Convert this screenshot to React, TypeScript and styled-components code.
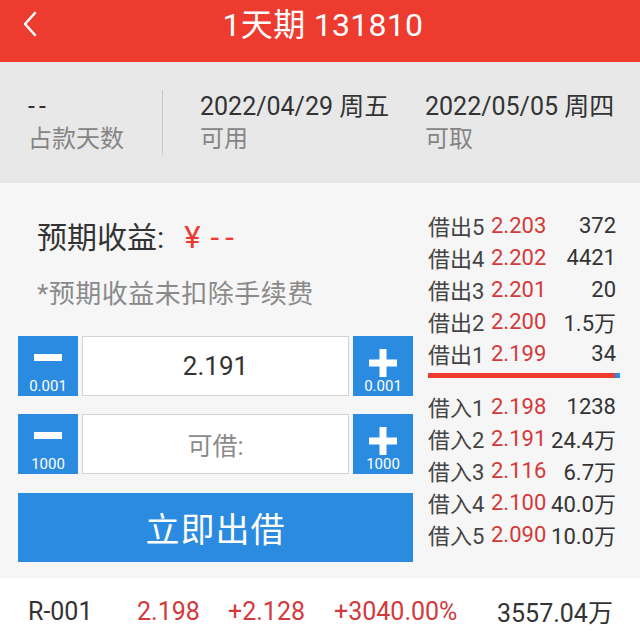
import React from 'react';
import styled, { createGlobalStyle } from 'styled-components';

const GlobalStyle = createGlobalStyle`
    html, body {
        margin: 0;
        padding: 0;
        background: #ffffff;
    }
    body {
        font-family: Roboto, "Noto Sans CJK SC", sans-serif;
        color: #333333;
    }
`;

const RED = '#ee3b30';
const BLUE = '#2b8be0';
const PRICE_RED = '#d3393b';

interface Level {
    label: string;
    price: string;
    volume: string;
}

const lends: Level[] = [
    { label: '借出5', price: '2.203', volume: '372' },
    { label: '借出4', price: '2.202', volume: '4421' },
    { label: '借出3', price: '2.201', volume: '20' },
    { label: '借出2', price: '2.200', volume: '1.5万' },
    { label: '借出1', price: '2.199', volume: '34' },
];

const borrows: Level[] = [
    { label: '借入1', price: '2.198', volume: '1238' },
    { label: '借入2', price: '2.191', volume: '24.4万' },
    { label: '借入3', price: '2.116', volume: '6.7万' },
    { label: '借入4', price: '2.100', volume: '40.0万' },
    { label: '借入5', price: '2.090', volume: '10.0万' },
];

const BackIcon = () => (
    <svg width="16" height="26" viewBox="0 0 16 26" fill="none">
        <path d="M13 2 L3 13 L13 24" stroke="#ffffff" strokeWidth="2.6" strokeLinecap="round" strokeLinejoin="round" />
    </svg>
);

const MinusIcon = () => (
    <svg width="28" height="28" viewBox="0 0 28 28">
        <rect x="0" y="5" width="28" height="7" fill="#ffffff" />
    </svg>
);

const PlusIcon = () => (
    <svg width="28" height="28" viewBox="0 0 28 28">
        <rect x="0" y="10.5" width="28" height="7" fill="#ffffff" />
        <rect x="10.5" y="0" width="7" height="28" fill="#ffffff" />
    </svg>
);

const Stepper = ({ step, value, placeholder }: { step: string; value?: string; placeholder?: string }) => (
    <StepRow>
        <StepButton>
            <MinusIcon />
            <StepLabel>{step}</StepLabel>
        </StepButton>
        <StepInput $muted={!value}>{value || placeholder}</StepInput>
        <StepButton>
            <PlusIcon />
            <StepLabel>{step}</StepLabel>
        </StepButton>
    </StepRow>
);

const BookRows = ({ rows }: { rows: Level[] }) => (
    <>
        {rows.map((r) => (
            <BookRow key={r.label}>
                <span>{r.label}</span>
                <BookPrice>{r.price}</BookPrice>
                <BookVolume>{r.volume}</BookVolume>
            </BookRow>
        ))}
    </>
);

export default function App() {
    return (
        <Page>
            <GlobalStyle />
            <Header>
                <BackButton><BackIcon /></BackButton>
                <Title>1天期 131810</Title>
            </Header>

            <InfoBar>
                <InfoItem $width="134px">
                    <InfoValue $dash>--</InfoValue>
                    <InfoLabel>占款天数</InfoLabel>
                </InfoItem>
                <Divider />
                <InfoItem $width="225px">
                    <InfoValue>2022/04/29 周五</InfoValue>
                    <InfoLabel>可用</InfoLabel>
                </InfoItem>
                <InfoItem>
                    <InfoValue>2022/05/05 周四</InfoValue>
                    <InfoLabel>可取</InfoLabel>
                </InfoItem>
            </InfoBar>

            <Main>
                <LeftColumn>
                    <Expected>
                        预期收益:
                        <Yen>¥</Yen>
                        <Dashes>--</Dashes>
                    </Expected>
                    <Note>*预期收益未扣除手续费</Note>
                    <Stepper step="0.001" value="2.191" />
                    <Stepper step="1000" placeholder="可借:" />
                    <SubmitButton>立即出借</SubmitButton>
                </LeftColumn>

                <Book>
                    <BookRows rows={lends} />
                    <Ratio>
                        <RatioPart $color="#ee3b30" $flex={37} />
                        <RatioPart $color={BLUE} $flex={1} />
                    </Ratio>
                    <BookRows rows={borrows} />
                </Book>
            </Main>

            <Quote>
                <QuoteCell $width="109px">R-001</QuoteCell>
                <QuoteCell $width="91px" $red>2.198</QuoteCell>
                <QuoteCell $width="106px" $red>+2.128</QuoteCell>
                <QuoteCell $width="163px" $red>+3040.00%</QuoteCell>
                <QuoteCell>3557.04万</QuoteCell>
            </Quote>
        </Page>
    );
}

const Page = styled.div`
    width: 640px;
    height: 640px;
    overflow: hidden;
    display: flex;
    flex-direction: column;
`;

const Header = styled.div`
    height: 62px;
    background: ${RED};
    display: flex;
    justify-content: center;
    position: relative;
`;

const BackButton = styled.div`
    position: absolute;
    left: 22px;
    top: 11px;
    display: flex;
`;

const Title = styled.div`
    color: #ffffff;
    font-size: 32px;
    line-height: 50px;
    letter-spacing: 0.3px;
    margin-left: 6px;
`;

const InfoBar = styled.div`
    height: 121px;
    background: #e8e8e8;
    display: flex;
    align-items: flex-start;
    padding: 28px 0 0 28px;
    box-sizing: border-box;
`;

const InfoItem = styled.div<{ $width?: string }>`
    width: ${p => p.$width || 'auto'};
    display: flex;
    flex-direction: column;
    gap: 2px;
    padding-top: 1px;
`;

const InfoValue = styled.div<{ $dash?: boolean }>`
    font-size: 25px;
    line-height: 31px;
    color: #333333;
    letter-spacing: ${p => p.$dash ? '4px' : '0'};
`;

const InfoLabel = styled.div`
    font-size: 24px;
    line-height: 31px;
    color: #858585;
`;

const Divider = styled.div`
    width: 1px;
    height: 65px;
    background: #c8c8c8;
    margin-right: 37px;
`;

const Main = styled.div`
    height: 395px;
    background: #f6f6f6;
    display: flex;
    gap: 15px;
    padding-left: 18px;
`;

const LeftColumn = styled.div`
    width: 395px;
    display: flex;
    flex-direction: column;
    padding-top: 35px;
`;

const Expected = styled.div`
    font-size: 30px;
    line-height: 40px;
    color: #333333;
    padding-left: 19px;
    display: flex;
    align-items: center;
`;

const Yen = styled.span`
    color: ${RED};
    margin-left: 20px;
    font-size: 31px;
`;

const Dashes = styled.span`
    color: ${RED};
    margin-left: 10px;
    letter-spacing: 6px;
    font-size: 31px;
`;

const Note = styled.div`
    font-size: 26px;
    line-height: 36px;
    letter-spacing: 0.5px;
    color: #8a8a8a;
    padding-left: 19px;
    margin-top: 18px;
    margin-bottom: 24px;
`;

const StepRow = styled.div`
    display: flex;
    gap: 4px;
    height: 60px;
    margin-bottom: 18px;
`;

const StepButton = styled.div`
    width: 60px;
    background: ${BLUE};
    display: flex;
    flex-direction: column;
    align-items: center;
    padding-top: 13px;
    box-sizing: border-box;
`;

const StepLabel = styled.div`
    color: #ffffff;
    font-size: 15px;
    line-height: 18px;
`;

const StepInput = styled.div<{ $muted?: boolean }>`
    flex: 1;
    background: #ffffff;
    border: 1px solid #d2d2d2;
    display: flex;
    align-items: center;
    justify-content: center;
    font-size: ${p => p.$muted ? '25px' : '26px'};
    color: ${p => p.$muted ? '#8a8a8a' : '#333333'};
`;

const SubmitButton = styled.div`
    height: 69px;
    background: ${BLUE};
    color: #ffffff;
    font-size: 34px;
    letter-spacing: 1px;
    display: flex;
    align-items: center;
    justify-content: center;
    margin-top: 1px;
`;

const Book = styled.div`
    width: 188px;
    padding-top: 26px;
    display: flex;
    flex-direction: column;
`;

const BookRow = styled.div`
    display: grid;
    grid-template-columns: 63px 57px 1fr;
    height: 32px;
    align-items: center;
    font-size: 22px;
    color: #444444;
    white-space: nowrap;
`;

const BookPrice = styled.span`
    color: ${PRICE_RED};
`;

const BookVolume = styled.span`
    text-align: right;
    color: #333333;
`;

const Ratio = styled.div`
    display: flex;
    height: 5px;
    margin: 4px -4px 12px 0;
`;

const RatioPart = styled.div<{ $color: string; $flex: number }>`
    flex: ${p => p.$flex};
    background: ${p => p.$color};
`;

const Quote = styled.div`
    flex: 1;
    background: #ffffff;
    display: flex;
    align-items: center;
    padding-left: 28px;
    padding-top: 4px;
`;

const QuoteCell = styled.div<{ $width?: string; $red?: boolean }>`
    width: ${p => p.$width || 'auto'};
    font-size: 25px;
    color: ${p => p.$red ? PRICE_RED : '#333333'};
`;
